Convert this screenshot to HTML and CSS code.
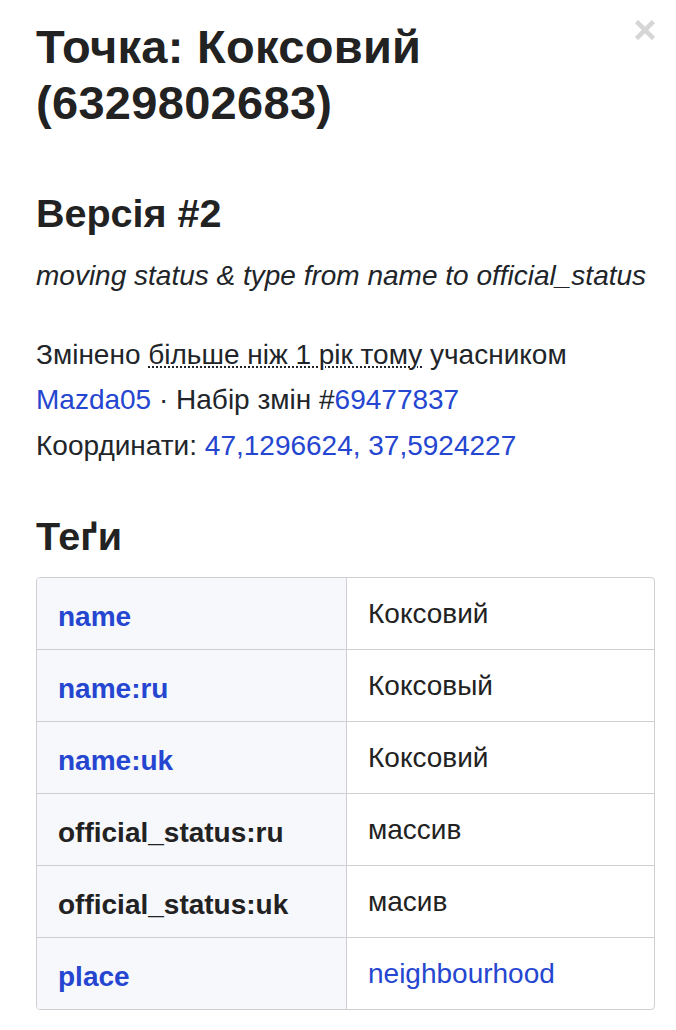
FILE: index.html
```html
<!DOCTYPE html>
<html lang="uk">
<head>
<meta charset="utf-8">
<title>Точка: Коксовий (6329802683)</title>
<link rel="stylesheet" href="styles.css">
</head>
<body>
<div class="sidebar">
  <div class="header">
    <h1 class="title">Точка: Коксовий (6329802683)</h1>
    <a class="close" href="#" aria-label="Закрити">
      <svg width="20" height="20" viewBox="0 0 20 20"><path d="M1.5 1.5 L18.5 18.5 M18.5 1.5 L1.5 18.5" stroke="#d6d6d6" stroke-width="4.6" stroke-linecap="butt"/></svg>
    </a>
  </div>
  <h2 class="section-title version">Версія #2</h2>
  <p class="comment">moving status &amp; type from name to official_status</p>
  <p class="meta">
    Змінено <abbr class="time" title="2019">більше ніж 1 рік тому</abbr> учасником<br>
    <a href="#" class="link">Mazda05</a> · Набір змін #<a href="#" class="link">69477837</a><br>
    Координати: <a href="#" class="link">47,1296624, 37,5924227</a>
  </p>
  <h2 class="section-title tags-title">Теґи</h2>
  <table class="tags">
    <tr><th class="key"><a href="#" class="link">name</a></th><td class="value">Коксовий</td></tr>
    <tr><th class="key"><a href="#" class="link">name:ru</a></th><td class="value">Коксовый</td></tr>
    <tr><th class="key"><a href="#" class="link">name:uk</a></th><td class="value">Коксовий</td></tr>
    <tr><th class="key">official_status:ru</th><td class="value">массив</td></tr>
    <tr><th class="key">official_status:uk</th><td class="value">масив</td></tr>
    <tr><th class="key"><a href="#" class="link">place</a></th><td class="value"><a href="#" class="link">neighbourhood</a></td></tr>
  </table>
</div>
</body>
</html>
```

FILE: styles.css
```css
html, body {
  margin: 0;
  padding: 0;
  background: #ffffff;
}

body {
  font-family: "Liberation Sans", Arial, Helvetica, sans-serif;
  color: #212529;
  font-size: 28px;
  line-height: 45.5px;
}

.sidebar {
  padding: 19px 21px 0 36px;
}

.header {
  display: flex;
  justify-content: space-between;
  align-items: flex-start;
}

.title {
  margin: 0;
  font-size: 47px;
  line-height: 56px;
  font-weight: 700;
  color: #222222;
  letter-spacing: 0.3px;
}

.close {
  display: block;
  margin-top: 1px;
  width: 20px;
  height: 20px;
  flex-shrink: 0;
}

.close svg {
  display: block;
}

.section-title {
  margin: 0;
  font-size: 39.5px;
  line-height: 48px;
  font-weight: 700;
  color: #222222;
}

.version {
  margin-top: 58px;
}

.comment {
  margin: 16px 0 0;
  font-style: italic;
}

.meta {
  margin: 33px 0 0;
}

.time {
  text-decoration: underline dotted;
  text-decoration-thickness: 1.5px;
  text-underline-offset: 3px;
  cursor: help;
}

.link {
  color: #2546d0;
  text-decoration: none;
}

.tags-title {
  margin-top: 44px;
}

.tags {
  margin-top: 17px;
  width: 619px;
  border-collapse: separate;
  border-spacing: 0;
  border: 1px solid #cfcfd2;
  border-radius: 4px;
  overflow: hidden;
  table-layout: fixed;
}

.tags th,
.tags td {
  line-height: 43px;
  padding: 14px 21px;
  text-align: left;
  vertical-align: top;
  border-bottom: 1px solid #cfcfd2;
}

.tags tr:last-child th,
.tags tr:last-child td {
  border-bottom: none;
}

.key {
  width: 267px;
  background: #f7f8fc;
  font-weight: 700;
  border-right: 1px solid #cfcfd2;
  color: #222222;
}

.tags .key {
  padding-top: 17px;
  padding-bottom: 11px;
}

.value {
  font-weight: 400;
  color: #222222;
}
```
